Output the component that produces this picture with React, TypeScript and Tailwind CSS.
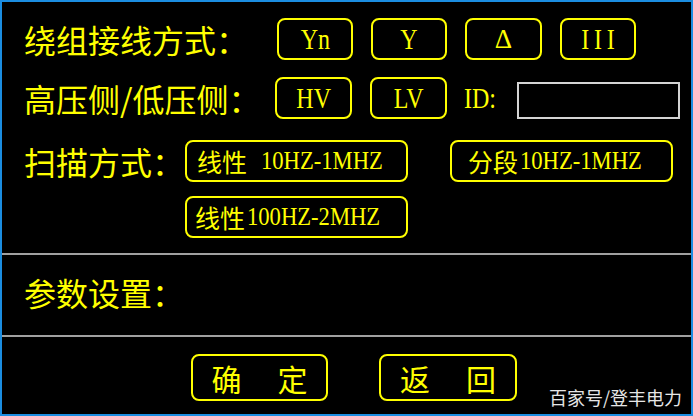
export default function App() {
  const label =
    "text-[32px] leading-none text-[#ffff00] font-['Noto_Sans_CJK_SC',sans-serif] whitespace-nowrap";
  const btn =
    "flex items-center justify-center border-2 border-[#ffff00] rounded-[8px] text-[#ffff00] font-['Liberation_Serif','Noto_Sans_CJK_SC',serif] leading-none whitespace-nowrap";
  const scanBtn =
    "flex items-center w-[223px] h-[42px] border-2 border-[#ffff00] rounded-[8px] text-[#ffff00] leading-none whitespace-nowrap";
  const latin = "inline-block text-[30px] leading-none scale-x-[0.8] font-['Liberation_Serif',serif]";
  const cjk25 = "text-[25px] leading-none font-['Noto_Sans_CJK_SC',sans-serif]";
  const scanLatin =
    "inline-block text-[26px] leading-none scale-x-[0.87] origin-left font-['Liberation_Serif',serif]";
  return (
    <div className="relative w-[693px] h-[416px] bg-black border-2 border-[#1b8de0] flex flex-col overflow-hidden">
      <div className="h-[251px] flex flex-col pl-[22px] pt-[16px]">
        <div className="flex items-center h-[42px]">
          <div className={`w-[253px] ${label}`}>绕组接线方式：</div>
          <div className="flex gap-[18px]">
            <div className={`${btn} w-[76px] h-[42px]`}>
              <span className={latin}>Yn</span>
            </div>
            <div className={`${btn} w-[76px] h-[42px]`}>
              <span className={latin}>Y</span>
            </div>
            <div className={`${btn} w-[77px] h-[42px]`}>
              <span className="inline-block text-[27px] leading-none font-['Liberation_Serif',serif]">Δ</span>
            </div>
            <div className={`${btn} w-[76px] h-[42px]`}>
              <span className={`${latin} tracking-[6px] pl-[6px]`}>III</span>
            </div>
          </div>
        </div>
        <div className="flex items-center h-[42px] mt-[17px]">
          <div className={`w-[251px] ${label}`}>高压侧/低压侧：</div>
          <div className={`${btn} w-[77px] h-[42px]`}>
            <span className={latin}>HV</span>
          </div>
          <div className={`${btn} w-[77px] h-[42px] ml-[18px]`}>
            <span className={latin}>LV</span>
          </div>
          <div className="ml-[17px] w-[53px] text-[#ffff00]">
            <span className={`${latin} origin-left`}>ID:</span>
          </div>
          <div className="self-end w-[163px] h-[37px] border-2 border-[#d4d4d4] bg-black" />
        </div>
        <div className="flex items-center h-[42px] mt-[21px]">
          <div className={`w-[161px] ${label}`}>扫描方式：</div>
          <div className={`${scanBtn} pl-[10px]`}>
            <span className={cjk25}>线性</span>
            <span className={`${scanLatin} ml-[14px]`}>10HZ-1MHZ</span>
          </div>
          <div className={`${scanBtn} pl-[16px] ml-[42px]`}>
            <span className={cjk25}>分段</span>
            <span className={`${scanLatin} ml-[2px]`}>10HZ-1MHZ</span>
          </div>
        </div>
        <div className="flex items-center h-[42px] mt-[14px] pl-[161px]">
          <div className={`${scanBtn} pl-[8px]`}>
            <span className={cjk25}>线性</span>
            <span className={`${scanLatin} ml-[2px]`}>100HZ-2MHZ</span>
          </div>
        </div>
      </div>
      <div className="h-[2px] bg-[#a0a0a0]" />
      <div className="h-[80px] flex items-center pl-[22px] pb-[6px]">
        <div className={label}>参数设置：</div>
      </div>
      <div className="h-[2px] bg-[#a0a0a0]" />
      <div className="flex-1 flex items-start pt-[17px] pl-[189px] gap-[51px]">
        <div className={`${btn} w-[137px] h-[47px] text-[30px] gap-[36px]`}>
          <span className="font-['Noto_Sans_CJK_SC',sans-serif]">确</span>
          <span className="font-['Noto_Sans_CJK_SC',sans-serif]">定</span>
        </div>
        <div className={`${btn} w-[138px] h-[47px] text-[30px] gap-[36px]`}>
          <span className="font-['Noto_Sans_CJK_SC',sans-serif]">返</span>
          <span className="font-['Noto_Sans_CJK_SC',sans-serif]">回</span>
        </div>
      </div>
      <div className="absolute right-[9px] bottom-[8px] text-[18px] leading-none text-[#e6e6e6] font-['Noto_Sans_CJK_SC',sans-serif] whitespace-nowrap">
        百家号/登丰电力
      </div>
    </div>
  );
}
